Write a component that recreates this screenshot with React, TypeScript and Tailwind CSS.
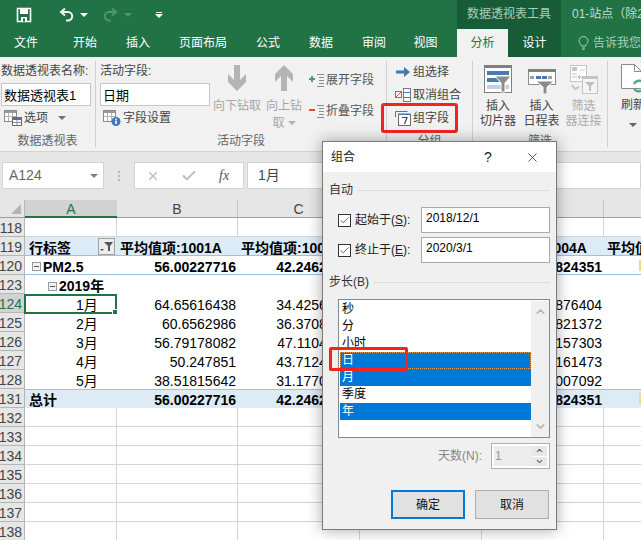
import { Check, ChevronDown, ChevronUp, X } from "lucide-react";

function Caret({ className = "border-t-[#606060]" }: { className?: string }) {
  return <span className={`inline-block w-0 h-0 border-x-[4px] border-x-transparent border-t-[4px] ${className}`} />;
}

function SaveIcon() {
  return (
    <svg width="16" height="16" viewBox="0 0 16 16" className="shrink-0">
      <path d="M1.5 1.5h13v13h-13z" fill="none" stroke="#fff" strokeWidth="1.6" />
      <rect x="4" y="1" width="8" height="6" fill="#fff" />
      <rect x="5" y="10" width="6" height="5" fill="#fff" />
      <rect x="7" y="11.5" width="2" height="3" fill="#217346" />
    </svg>
  );
}

function UndoIcon({ color, flip }: { color: string; flip?: boolean }) {
  return (
    <svg width="16" height="15" viewBox="0 0 16 15" className={flip ? "-scale-x-100 shrink-0" : "shrink-0"}>
      <path d="M6 1.5 2 5l4 3.5" fill="none" stroke={color} strokeWidth="2" />
      <path d="M2.5 5H9a4.2 4.2 0 0 1 0 8.4H7" fill="none" stroke={color} strokeWidth="2" />
    </svg>
  );
}

function DownArrow({ up }: { up?: boolean }) {
  return (
    <svg width="22" height="26" viewBox="0 0 22 26" className={up ? "rotate-180" : ""}>
      <path d="M8 0h6v15l6-6v8l-9 9-9-9V9l6 6z" fill="#b4b4b4" />
    </svg>
  );
}

function TreeIcon({ minus }: { minus?: boolean }) {
  return (
    <svg width="16" height="14" viewBox="0 0 16 14" className="shrink-0">
      {minus ? (
        <rect x="0" y="5" width="6" height="2" fill="#d2532f" />
      ) : (
        <path d="M2 3h2v2h2v2H4v2H2V7H0V5h2z" fill="#4c9a7a" />
      )}
      <path d="M8 1.5h7M10 4.5h5M10 7.5h5M10 10.5h5M8 13.5h7" stroke="#8a8a8a" strokeWidth="1" />
    </svg>
  );
}

function TableIcon({ info }: { info?: boolean }) {
  return (
    <svg width="18" height="16" viewBox="0 0 18 16" className="shrink-0">
      <rect x="0.5" y="0.5" width="12" height="11" fill="#fff" stroke="#8a8a8a" />
      <rect x="1" y="1" width="11" height="2" fill="#9a9a9a" />
      <path d="M4.5 3v8M8.5 3v8M1 6.5h11" stroke="#b5b5b5" />
      {info ? (
        <g>
          <circle cx="13" cy="11.5" r="4.5" fill="#3f78b5" />
          <rect x="12.2" y="10.5" width="1.6" height="3.5" fill="#fff" />
          <rect x="12.2" y="8.6" width="1.6" height="1.3" fill="#fff" />
        </g>
      ) : (
        <g>
          <rect x="8.5" y="7.5" width="9" height="8" fill="#fff" stroke="#6a6a6a" />
          <rect x="9" y="8" width="8" height="2" fill="#3f78b5" />
          <path d="M13 10v5M9 12.5h8" stroke="#8a8a8a" />
        </g>
      )}
    </svg>
  );
}

function SlicerIcon() {
  return (
    <svg width="28" height="28" viewBox="0 0 28 28" className="shrink-0">
      <rect x="0.5" y="0.5" width="27" height="27" fill="#fff" stroke="#7f7f7f" />
      <rect x="0" y="0" width="28" height="3" fill="#7f7f7f" />
      <rect x="3" y="6" width="22" height="4" fill="#4a7ab5" />
      <rect x="3" y="13" width="12" height="4" fill="#4a7ab5" />
      <rect x="3" y="20" width="22" height="4" fill="#bcd0e6" />
      <path d="M11 11h16l-6 7v9h-4v-9z" fill="#8c8c8c" stroke="#fff" />
    </svg>
  );
}

function TimelineIcon() {
  return (
    <svg width="28" height="25" viewBox="0 0 28 25" className="shrink-0">
      <rect x="0.5" y="0.5" width="27" height="15" fill="#fff" stroke="#8a8a8a" />
      <rect x="0" y="0" width="28" height="3" fill="#7f7f7f" />
      <rect x="2" y="7" width="4" height="3" fill="#a0a0a0" />
      <rect x="8" y="7" width="5" height="3" fill="#4a7ab5" />
      <rect x="14" y="7" width="5" height="3" fill="#4a7ab5" />
      <rect x="20" y="7" width="4" height="3" fill="#a0a0a0" />
      <path d="M8 12h18l-7 6v7h-4v-7z" fill="#8c8c8c" stroke="#fff" />
    </svg>
  );
}

function ConnectIcon() {
  return (
    <svg width="28" height="29" viewBox="0 0 28 29" className="shrink-0">
      <rect x="0.5" y="0.5" width="16" height="16" fill="#fff" stroke="#c4c4c4" />
      <rect x="2" y="2" width="5" height="4" fill="#c4c4c4" />
      <path d="M2 9h5M2 12h5M10 5h5" stroke="#c4c4c4" />
      <path d="M10 10l-2 2 2 2M8 12h6" stroke="#a8b8a8" fill="none" />
      <rect x="12.5" y="11.5" width="15" height="17" fill="#f4f4f4" stroke="#c4c4c4" />
      <rect x="12" y="11" width="16" height="3" fill="#c4c4c4" />
      <path d="M15 17h10l-4 4v5h-2v-5z" fill="#bdbdbd" />
      <path d="M2 20l3 4 4-2" stroke="#b8c8d8" strokeWidth="2" fill="none" />
    </svg>
  );
}

function RefreshIcon() {
  return (
    <svg width="24" height="29" viewBox="0 0 24 29" className="shrink-0">
      <path d="M0.5 0.5h13l7 7v17H0.5z" fill="#fff" stroke="#8a8a8a" />
      <path d="M13.5 0.5v7h7" fill="none" stroke="#8a8a8a" />
      <path d="M23 19a6 6 0 0 0-10 1M13 25a6 6 0 0 0 10-1" fill="none" stroke="#58a58a" strokeWidth="2.4" />
    </svg>
  );
}

function Group({ width, title, children }: { width: string; title: string; children: React.ReactNode }) {
  return (
    <div className={`flex flex-col shrink-0 h-full border-r border-[#d0d0d0] ${width}`}>
      <div className="flex-1 flex min-h-0">{children}</div>
      <div className="h-[14px] leading-[16px] text-center text-[#666]">{title}</div>
    </div>
  );
}

function Input({ value, width }: { value: string; width: string }) {
  return (
    <div className={`h-[23px] leading-[23px] bg-white border border-[#c6c6c6] text-[13px] text-black pl-[2px] ${width}`}>
      {value}
    </div>
  );
}

function Ribbon() {
  return (
    <div className="h-[95px] shrink-0 flex py-[4px] bg-[#f1f1f1] border-b border-[#d2d2d2] text-[12px] text-[#444] overflow-hidden">
      <Group width="w-[96px]" title="数据透视表">
        <div className="flex flex-col pl-px">
          <div className="h-[22px] leading-[20px] whitespace-nowrap">数据透视表名称:</div>
          <Input value="数据透视表1" width="w-[90px]" />
          <div className="mt-[3px] h-[18px] flex items-center gap-[2px] pl-[3px]">
            <TableIcon />
            <span className="text-[12px]">选项</span>
            <Caret className="ml-[8px] border-t-[#707070]" />
          </div>
        </div>
      </Group>
      <Group width="w-[291px]" title="活动字段">
        <div className="flex flex-col pl-[4px] w-[116px] shrink-0">
          <div className="h-[22px] leading-[20px]">活动字段:</div>
          <Input value="日期" width="w-[110px]" />
          <div className="mt-[3px] h-[18px] flex items-center gap-[2px] pl-[3px]">
            <TableIcon info />
            <span>字段设置</span>
          </div>
        </div>
        <div className="w-[50px] shrink-0 flex flex-col items-center pt-[4px] text-[#a6a6a6]">
          <DownArrow />
          <span className="mt-[6px] whitespace-nowrap">向下钻取</span>
        </div>
        <div className="w-[44px] shrink-0 flex flex-col items-center pt-[4px] text-[#a6a6a6]">
          <DownArrow up />
          <span className="mt-[6px] whitespace-nowrap">向上钻</span>
          <span className="flex items-center gap-[3px] leading-[16px]">
            取<Caret className="border-t-[#b0b0b0]" />
          </span>
        </div>
        <div className="flex flex-col pl-[3px] pt-[10px] gap-[13px] text-[#555]">
          <div className="h-[18px] flex items-center gap-[1px] whitespace-nowrap">
            <TreeIcon />
            展开字段
          </div>
          <div className="h-[18px] flex items-center gap-[1px] whitespace-nowrap">
            <TreeIcon minus />
            折叠字段
          </div>
        </div>
      </Group>
      <Group width="w-[86px]" title="分组">
        <div className="flex flex-col pl-[8px] pt-[2px] gap-[5px] text-[#444]">
          <div className="h-[18px] flex items-center gap-[2px]">
            <svg width="16" height="12" viewBox="0 0 16 12" className="shrink-0">
              <path d="M1 4.5h8V1l6 5-6 5V7.500H1z" fill="#3f78b5" />
            </svg>
            组选择
          </div>
          <div className="h-[18px] flex items-center gap-[2px]">
            <svg width="16" height="14" viewBox="0 0 16 14" className="shrink-0">
              <rect x="0.500" y="3.500" width="6" height="6" fill="#fff" stroke="#d2532f" />
              <path d="M1 9l5-5" stroke="#d2532f" />
              <rect x="8.500" y="0.500" width="7" height="13" fill="#fff" stroke="#7a7a7a" />
              <path d="M8.500 4.500h7M8.500 9.500h7" stroke="#3f78b5" />
            </svg>
            取消组合
          </div>
          <div className="h-[18px] flex items-center gap-[2px]">
            <svg width="16" height="15" viewBox="0 0 16 15" className="shrink-0">
              <path d="M0.500 6V0.500h12" fill="none" stroke="#3f78b5" strokeWidth="1" />
              <rect x="3.500" y="3.500" width="12" height="11" fill="#fff" stroke="#6a6a6a" />
              <rect x="3" y="2.500" width="13" height="1.500" fill="#3f78b5" />
              <path d="M7 6.500h5L9.500 13" fill="none" stroke="#444" strokeWidth="1.200" />
            </svg>
            组字段
          </div>
        </div>
      </Group>
      <Group width="w-[135px]" title="筛选">
        <div className="flex w-full pt-[4px] text-center leading-[15px]">
          <div className="w-[50px] flex flex-col items-center">
            <SlicerIcon />
            <span className="mt-[6px]">插入</span>
            <span className="whitespace-nowrap">切片器</span>
          </div>
          <div className="w-[37px] flex flex-col items-center">
            <div className="mt-[4px]"><TimelineIcon /></div>
            <span className="mt-[5px]">插入</span>
            <span className="whitespace-nowrap">日程表</span>
          </div>
          <div className="w-[47px] flex flex-col items-center text-[#aaa]">
            <ConnectIcon />
            <span className="mt-[5px]">筛选</span>
            <span className="whitespace-nowrap">器连接</span>
          </div>
        </div>
      </Group>
      <div className="flex flex-col pl-[13px] pt-[3px] leading-[15px]">
        <RefreshIcon />
        <span className="mt-[5px] whitespace-nowrap">刷新</span>
        <div className="mt-[4px] ml-[8px] leading-none">
          <Caret className="block border-t-[#666]" />
        </div>
      </div>
    </div>
  );
}

function FormulaBar() {
  return (
    <div className="h-[48px] shrink-0 bg-[#e6e6e6] pt-[10px] pl-[2px] flex items-start">
      <div className="w-[102px] h-[27px] bg-white border border-[#d4d4d4] flex items-center justify-between pl-[6px] pr-[5px] text-[14px] text-[#666]">
        A124
        <Caret className="border-t-[#808080]" />
      </div>
      <div className="w-[30px] h-[27px] flex flex-col items-center justify-center gap-[2px]">
        <span className="w-[2px] h-[2px] bg-[#b4b4b4]" />
        <span className="w-[2px] h-[2px] bg-[#b4b4b4]" />
        <span className="w-[2px] h-[2px] bg-[#b4b4b4]" />
      </div>
      <div className="w-[110px] h-[27px] bg-white border border-[#d4d4d4] flex items-center pl-[11px] text-[#bbb]">
        <X size={14} strokeWidth={2.5} className="text-[#bfbfbf]" />
        <Check size={16} strokeWidth={3} className="ml-[21px] text-[#bfbfbf]" />
        <span className="ml-[22px] italic font-['Liberation_Serif',serif] text-[14px] text-[#555]">fx</span>
      </div>
      <div className="ml-[3px] flex-1 h-[27px] bg-white border border-[#d4d4d4] flex items-center pl-[10px] text-[14px] text-[#444]">
        1月
      </div>
    </div>
  );
}

function ColHeader() {
  const cols = [
    { t: "B", w: "w-[121px]" },
    { t: "C", w: "w-[122px]" },
    { t: "D", w: "w-[122px]" },
    { t: "E", w: "w-[122px]" },
    { t: "F", w: "w-[122px]" },
  ];
  return (
    <div className="h-[18px] shrink-0 flex bg-[#e6e6e6] border-b border-[#9f9f9f] text-[14px] leading-[19px] text-[#444]">
      <div className="w-[25px] shrink-0 border-r border-[#b5b5b5] flex items-end justify-end pr-[3px] pb-[3px]">
        <span className="w-0 h-0 border-l-[10px] border-l-transparent border-b-[10px] border-b-[#b4b4b4]" />
      </div>
      <div className="w-[92px] shrink-0 h-[18px] bg-[#d2d2d2] border-b-2 border-[#217346] text-center text-[#217346]">A</div>
      {cols.map((c) => (
        <div key={c.t} className={`${c.w} shrink-0 border-r border-[#c4c4c4] text-center`}>{c.t}</div>
      ))}
    </div>
  );
}

type RowKind = "grid" | "plain" | "head" | "sub" | "total";

const rows: { n: number; kind: RowKind; cells?: string[] }[] = [
  { n: 118, kind: "grid" },
  { n: 119, kind: "head", cells: ["行标签", "平均值项:1001A", "平均值项:1002A", "平均值项:1003A", "平均值项:1004A", "平均值项:1005A"] },
  { n: 120, kind: "sub", cells: ["PM2.5", "56.00227716", "42.24621905", "50.10472631", "47.50824351", ""] },
  { n: 123, kind: "plain", cells: ["2019年", "", "", "", "", ""] },
  { n: 124, kind: "plain", cells: ["1月", "64.65616438", "34.42561827", "51.20364718", "48.90876404", ""] },
  { n: 125, kind: "plain", cells: ["2月", "60.6562986", "36.37082914", "49.66120385", "46.72821372", ""] },
  { n: 126, kind: "plain", cells: ["3月", "56.79178082", "47.11043657", "55.30129846", "50.11157303", ""] },
  { n: 127, kind: "plain", cells: ["4月", "50.247851", "43.71246038", "48.92701563", "45.38161473", ""] },
  { n: 128, kind: "plain", cells: ["5月", "38.51815642", "31.17709264", "42.85016937", "41.60007092", ""] },
  { n: 131, kind: "total", cells: ["总计", "56.00227716", "42.24621905", "50.10472631", "47.50824351", ""] },
  { n: 132, kind: "grid" },
  { n: 133, kind: "grid" },
  { n: 134, kind: "grid" },
  { n: 135, kind: "grid" },
  { n: 136, kind: "grid" },
  { n: 137, kind: "grid" },
  { n: 138, kind: "grid" },
];

function MinusBox() {
  return (
    <span className="inline-flex items-center justify-center w-[9px] h-[9px] border border-[#9a9a9a] bg-[#eef2f7] mr-[2px] shrink-0">
      <span className="w-[5px] h-px bg-[#555]" />
    </span>
  );
}

function SheetRow({ n, kind, cells }: { n: number; kind: RowKind; cells?: string[] }) {
  const selected = n === 124;
  const widths = ["w-[92px]", "w-[121px]", "w-[122px]", "w-[122px]", "w-[122px]", "w-[122px]"];
  const bg = kind === "head" || kind === "total" ? "bg-[#ddebf7]" : "bg-white";
  const line =
    kind === "head" || kind === "sub"
      ? "border-b border-[#9bc2e6]"
      : kind === "total"
        ? "shadow-[inset_0_1px_0_#9bc2e6]"
        : "";
  const bold = kind !== "plain" || n === 123 ? "font-bold" : "";
  return (
    <div className="h-[19px] shrink-0 flex text-[14px] leading-[18px]">
      <div
        className={`w-[25px] shrink-0 border-r border-b border-[#b5b5b5] text-right pr-[2px] leading-[20px] overflow-hidden whitespace-nowrap ${
          selected ? "bg-[#d2d2d2] text-[#217346]" : "bg-[#e6e6e6] text-[#444]"
        }`}
      >
        <span className="-ml-[3px]">{n}</span>
      </div>
      <div className={`flex flex-1 min-w-0 ${bg} ${line}`}>
        {widths.map((w, i) => {
          const grid = kind === "grid" ? "border-r border-b border-[#d4d4d4]" : "";
          const text = cells ? cells[i] : "";
          let align = "justify-end pr-[2px]";
          if (kind === "head") align = "justify-start pl-[3px]";
          if (i === 0) {
            if (kind === "plain" && n === 123) align = "justify-start pl-[23px]";
            else if (kind === "plain") align = "justify-start pl-[51px]";
            else if (kind === "sub") align = "justify-start pl-[7px]";
            else align = "justify-start pl-[4px]";
          }
          const hasBox = i === 0 && (kind === "sub" || n === 123);
          const mark = i === 5 && (kind === "sub" || kind === "total");
          return (
            <div key={i} className={`relative shrink-0 flex items-center pt-[3px] overflow-hidden whitespace-nowrap text-black ${w} ${grid} ${align} ${bold}`}>
              {hasBox && <MinusBox />}
              {text}
              {kind === "head" && i === 0 && (
                <span className="absolute left-[73px] top-[1px] w-[17px] h-[17px] border border-[#a0a0a0] bg-[#ececec] flex items-center justify-center">
                  <svg width="13" height="11" viewBox="0 0 13 11">
                    <path d="M4 1h9L10 5v5H8V5z" fill="#555" />
                    <path d="M0 8h4L2 10z" fill="#555" />
                  </svg>
                </span>
              )}
              {mark && <span className="absolute left-[35px] top-[4px] w-[2px] h-[11px] bg-[#f3d88c]" />}
            </div>
          );
        })}
      </div>
    </div>
  );
}

function GroupLabel({ title }: { title: string }) {
  return (
    <div className="flex items-center gap-[5px] text-[12px] text-[#333] h-[16px]">
      <span className="shrink-0">{title}</span>
      <span className="flex-1 h-px bg-[#dcdcdc]" />
    </div>
  );
}

function CheckRow({ label, hot, value }: { label: string; hot: string; value: string }) {
  return (
    <div className="flex items-center h-[26px] pl-[9px]">
      <span className="w-[13px] h-[13px] border border-[#333] bg-white flex items-center justify-center shrink-0">
        <Check size={11} strokeWidth={1.6} className="text-[#333]" />
      </span>
      <span className="ml-[4px] w-[66px] whitespace-nowrap text-[12px] text-[#222]">
        {label}(<span className="underline">{hot}</span>):
      </span>
      <div className="w-[129px] h-[26px] bg-white border border-[#a9a9a9] pl-[4px] text-[12px] leading-[20px] text-black">{value}</div>
    </div>
  );
}

function Dialog() {
  const items = [
    { t: "秒", on: false },
    { t: "分", on: false },
    { t: "小时", on: false },
    { t: "日", on: true, focus: true },
    { t: "月", on: true },
    { t: "季度", on: false },
    { t: "年", on: true },
  ];
  return (
    <div className="absolute left-[322px] top-[141px] w-[235px] h-[389px] flex flex-col border border-[#7a7a7a] bg-[#f0f0f0] shadow-[0_0_14px_rgba(0,0,0,0.35)]">
      <div className="h-[30px] shrink-0 bg-white flex items-center pl-[8px] text-[12px] text-[#222]">
        <span>组合</span>
        <span className="ml-[129px] text-[14px] font-['Liberation_Sans',sans-serif]">?</span>
        <X size={15} strokeWidth={1.2} className="ml-[33px] text-[#222]" />
      </div>
      <div className="px-[6px] pt-[10px] flex flex-col">
        <GroupLabel title="自动" />
        <div className="mt-[9px] flex flex-col gap-[4px]">
          <CheckRow label="起始于" hot="S" value="2018/12/1" />
          <CheckRow label="终止于" hot="E" value="2020/3/1" />
        </div>
        <div className="mt-[11px]">
          <GroupLabel title="步长(B)" />
        </div>
        <div className="mt-[9px] ml-[9px] w-[212px] h-[139px] border border-[#828790] bg-white flex pl-px pt-px">
          <div className="w-[191px] shrink-0 flex flex-col text-[12px]">
            {items.map((it) => (
              <div
                key={it.t}
                className={`h-[17px] shrink-0 leading-[17px] pl-[2px] ${it.on ? "bg-[#0078d7] text-white" : "text-black"} ${
                  it.focus ? "outline-1 -outline-offset-1 outline-dotted outline-[#e8a04a]" : ""
                }`}
              >
                {it.t}
              </div>
            ))}
          </div>
          <div className="flex-1 bg-[#f0f0f0] flex flex-col items-center justify-between py-[4px] text-[#b8b8b8]">
            <ChevronUp size={13} strokeWidth={3} />
            <ChevronDown size={13} strokeWidth={3} />
          </div>
        </div>
        <div className="mt-[5px] flex items-center justify-end">
          <span className="text-[12px] text-[#888] whitespace-nowrap mr-[9px]">天数(N):</span>
          <div className="w-[59px] h-[26px] shrink-0 border border-[#b0b0b0] bg-white flex p-[2px]">
            <div className="flex-1 bg-[#ececec] text-[12px] text-[#999] pl-px leading-[20px]">1</div>
            <div className="w-[15px] flex flex-col gap-px">
              <div className="flex-1 bg-[#e8e8e8] flex items-center justify-center">
                <ChevronUp size={9} strokeWidth={3} className="text-[#666]" />
              </div>
              <div className="flex-1 bg-[#e8e8e8] flex items-center justify-center">
                <ChevronDown size={9} strokeWidth={3} className="text-[#666]" />
              </div>
            </div>
          </div>
        </div>
        <div className="mt-[21px] ml-[62px] flex gap-[10px] text-[12px] text-[#111]">
          <div className="w-[74px] h-[29px] bg-[#e1e1e1] border-2 border-[#0078d7] flex items-center justify-center">确定</div>
          <div className="w-[74px] h-[29px] bg-[#e1e1e1] border border-[#adadad] flex items-center justify-center">取消</div>
        </div>
      </div>
    </div>
  );
}

export default function App() {
  const tabs = [
    { t: "文件", w: "w-[52px]" },
    { t: "开始", w: "w-[66px]" },
    { t: "插入", w: "w-[40px]" },
    { t: "页面布局", w: "w-[90px]" },
    { t: "公式", w: "w-[40px]" },
    { t: "数据", w: "w-[66px]" },
    { t: "审阅", w: "w-[40px]" },
    { t: "视图", w: "w-[63px]" },
  ];
  return (
    <div className="relative w-[641px] h-[540px] overflow-hidden flex flex-col bg-white font-['Liberation_Sans','Noto_Sans_CJK_SC',sans-serif]">
      <div className="h-[29px] shrink-0 flex bg-[#217346] text-[12px]">
        <div className="w-[457px] shrink-0 flex items-center pl-[16px]">
          <SaveIcon />
          <div className="ml-[27px]"><UndoIcon color="#f2f2f2" /></div>
          <Caret className="ml-[5px] border-t-white" />
          <div className="ml-[14px]"><UndoIcon color="#4f9473" flip /></div>
          <Caret className="ml-[6px] border-t-[#4f9473]" />
          <span className="ml-[23px] flex flex-col items-center gap-px">
            <span className="w-[6px] h-px bg-white" />
            <Caret className="border-t-white" />
          </span>
        </div>
        <div className="w-[104px] shrink-0 bg-[#185c37] text-center leading-[29px] text-[#a9d0bb] whitespace-nowrap">数据透视表工具</div>
        <div className="pl-[11px] leading-[29px] text-[#c2dccd] whitespace-nowrap">01-站点（除2</div>
      </div>
      <div className="h-[28px] shrink-0 flex bg-[#217346] text-[12px] text-white leading-[28px]">
        {tabs.map((t) => (
          <div key={t.t} className={`${t.w} shrink-0 text-center`}>{t.t}</div>
        ))}
        <div className="w-[51px] shrink-0 text-center bg-[#f1f1f1] text-[#217346]">分析</div>
        <div className="w-[53px] shrink-0 text-center bg-[#185c37]">设计</div>
        <div className="pl-[17px] flex items-center gap-[4px] text-[#a9d0bb] whitespace-nowrap">
          <svg width="11" height="14" viewBox="0 0 11 14">
            <path d="M3.500 10C3 8 1 7 1 4.800a4.500 4.200 0 0 1 9 0C10 7 8 8 7.500 10zM4 12h3M4.500 13.500h2" fill="none" stroke="#a9d0bb" />
          </svg>
          告诉我您
        </div>
      </div>
      <Ribbon />
      <FormulaBar />
      <ColHeader />
      <div className="relative flex flex-col">
        {rows.map((r) => (
          <SheetRow key={r.n} n={r.n} kind={r.kind} cells={r.cells} />
        ))}
        <div className="absolute left-[24px] top-[76px] w-[93px] h-[20px] border-2 border-[#217346]">
          <span className="absolute -right-[3px] -bottom-[3px] w-[6px] h-[6px] bg-[#217346] border border-white" />
        </div>
      </div>
      <div className="absolute left-[381px] top-[103px] w-[77px] h-[30px] rounded-[3px] border-[3px] border-[#f4231c]" />
      <Dialog />
      <div className="absolute left-[329px] top-[347px] w-[79px] h-[24px] rounded-[2px] border-[3px] border-[#f4231c]" />
    </div>
  );
}
